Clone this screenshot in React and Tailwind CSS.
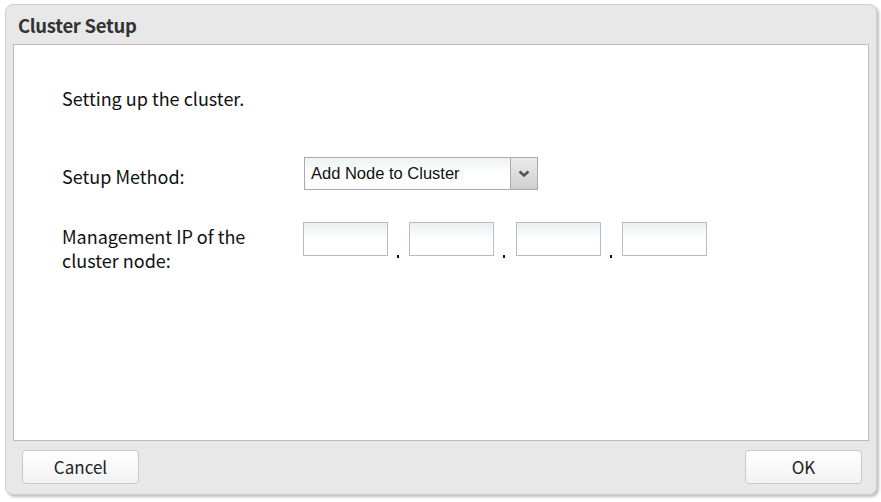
import React from "react";

const font = { fontFamily: '"Noto Sans CJK KR", "Noto Sans", sans-serif' };

function IpBox() {
  return (
    <div className="w-[85px] h-[34px] border border-[#b9b9cc] bg-gradient-to-b from-[#e9efef] via-white to-white" />
  );
}

function Dot({ w }) {
  return (
    <div className={`${w} h-[34px] relative`}>
      <div className="absolute left-[9px] bottom-[-2px] w-[2px] h-[3px] bg-[#111]" />
    </div>
  );
}

export default function App() {
  return (
    <div className="w-[881px] h-[502px] bg-white pt-[4px] pl-[5px]" style={font}>
      <div className="w-[872px] h-[491px] bg-[#e8e8e8] rounded-[8px] border border-[#cfcfcf] shadow-[2px_2px_3px_rgba(0,0,0,0.25)] flex flex-col">
        <div className="h-[39px] pl-[12px] flex items-center">
          <span className="text-[18.5px] font-bold text-[#333333] tracking-[-0.3px] mt-[2px]">Cluster Setup</span>
        </div>
        <div className="mx-[7px] h-[397px] bg-white border border-[#c4b9b9] pl-[48px] pt-[41px]">
          <div className="text-[18px] leading-[24px] text-[#111]">Setting up the cluster.</div>
          <div className="flex items-center mt-[47px]">
            <div className="w-[242px] text-[18px] leading-[24px] text-[#111] pt-[4px]">Setup Method:</div>
            <div className="w-[234px] h-[33px] border border-[#aaaaaa] flex bg-gradient-to-b from-[#eef2f2] via-white to-white">
              <div className="flex-1 pl-[6px] flex items-center text-[16.5px] text-[#111]" style={{ fontFamily: '"Liberation Sans", Arial, sans-serif' }}>
                Add Node to Cluster
              </div>
              <div className="w-[27px] border-l border-[#aaaaaa] bg-gradient-to-b from-[#ececec] to-[#cfcfcf] flex items-center justify-center">
                <svg width="12" height="8" viewBox="0 0 12 8">
                  <path d="M1.5 1.5 L6 5.5 L10.5 1.5" fill="none" stroke="#555" strokeWidth="2.6" />
                </svg>
              </div>
            </div>
          </div>
          <div className="flex mt-[32px]">
            <div className="w-[241px] text-[18px] leading-[24px] text-[#111] pt-[2px]">
              <div>Management IP of the</div>
              <div>cluster node:</div>
            </div>
            <div className="flex items-start">
              <IpBox />
              <Dot w="w-[21px]" />
              <IpBox />
              <Dot w="w-[22px]" />
              <IpBox />
              <Dot w="w-[21px]" />
              <IpBox />
            </div>
          </div>
        </div>
        <div className="flex justify-between pl-[16px] pr-[14px] pt-[9px]">
          <button className="w-[117px] h-[34px] rounded-[4px] border border-[#c8c8c8] bg-gradient-to-b from-white to-[#f2f2f2] text-[17px] text-[#222]">Cancel</button>
          <button className="w-[117px] h-[34px] rounded-[4px] border border-[#c8c8c8] bg-gradient-to-b from-white to-[#f2f2f2] text-[17px] text-[#222]">OK</button>
        </div>
      </div>
    </div>
  );
}
